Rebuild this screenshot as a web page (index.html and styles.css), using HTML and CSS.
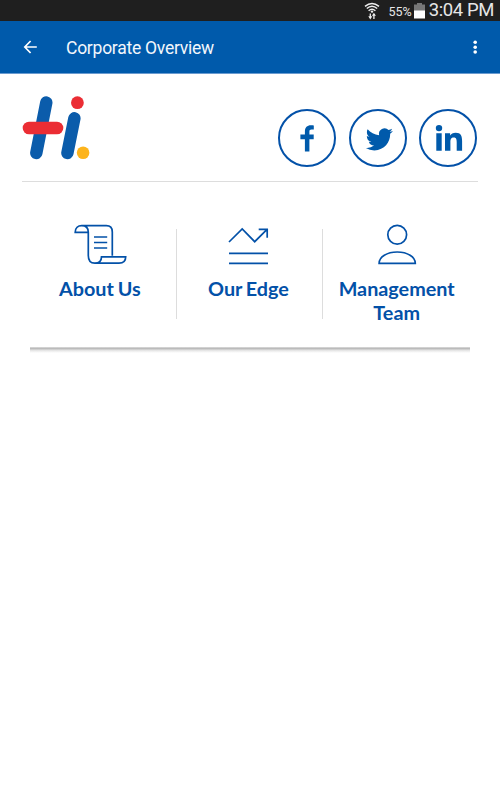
FILE: index.html
```
<!DOCTYPE html>
<html lang="en">
<head>
    <meta charset="UTF-8">
    <title>Corporate Overview</title>
    <link rel="stylesheet" href="styles.css">
</head>
<body>
    <div class="status-bar">
        <svg class="wifi" width="16" height="18" viewBox="0 0 16 18" fill="none" stroke="#eee" stroke-width="1.4">
            <path d="M1 4.4Q8 -1.6 15 4.4M2.8 6.6Q8 2 13.2 6.6M4.6 8.7Q8 5.6 11.4 8.7"/>
            <circle cx="8" cy="9.6" r="1.2" fill="#eee" stroke="none"/>
            <path d="M6.3 11.5V16M9.9 12V17" stroke-width="1.3"/>
            <path d="M4.3 14.2H8.3L6.3 17.4ZM7.9 13.8H11.9L9.9 10.8Z" fill="#eee" stroke="none"/>
        </svg>
        <span class="battery-level">55%</span>
        <svg class="battery" width="11" height="16" viewBox="0 0 11 16">
            <path d="M3 0H8V1.5H11V8H0V1.5H3Z" fill="#777"/>
            <path d="M0 7.5H11V15.5H0Z" fill="#fff"/>
        </svg>
        <span class="clock">3:04 PM</span>
    </div>

    <header class="app-bar">
        <svg width="14" height="14" viewBox="0 0 14 14" fill="none" stroke="#fff" stroke-width="1.7">
            <path d="M7.6 1L1.8 7L7.6 13M1.8 7H13.8"/>
        </svg>
        <h1>Corporate Overview</h1>
        <svg width="4" height="14" viewBox="0 0 4 14" fill="#fff">
            <circle cx="2.2" cy="2.2" r="1.8"/>
            <circle cx="2.2" cy="7.2" r="1.8"/>
            <circle cx="2.2" cy="12" r="1.8"/>
        </svg>
    </header>

    <main>
        <div class="brand-row">
            <svg class="logo" width="68" height="64" viewBox="22 96 68 64" fill="none" stroke-linecap="round">
                <path d="M46.3 102.5L36.3 153M74.4 118.3L67.4 153" stroke="#0b5cab" stroke-width="12.4"/>
                <path d="M29 128H57" stroke="#eb2d34" stroke-width="12.6"/>
                <circle cx="77.4" cy="102.7" r="6.4" fill="#eb2d34"/>
                <circle cx="83.1" cy="152.8" r="6.3" fill="#fdb41c"/>
            </svg>
            <div class="social">
                <a class="social-link" aria-label="Facebook">
                    <svg width="58" height="58" viewBox="0 0 58 58">
                        <path d="M26.9 42.5V30.2H22.4V25.6H26.9V22.4C26.9 18.3 29.2 16.2 32.8 16.2C34.2 16.2 35.2 16.3 35.8 16.4V20.6H33.5C31.8 20.6 31.4 21.4 31.4 22.8V25.6H35.7V30.2H31.4V42.5Z"/>
                    </svg>
                </a>
                <a class="social-link" aria-label="Twitter">
                    <svg width="58" height="58" viewBox="0 0 58 58">
                        <path transform="translate(16.8 16.8) scale(1.13)" d="M23.954 4.569a10 10 0 0 1-2.825.775 4.958 4.958 0 0 0 2.163-2.723c-.951.555-2.005.959-3.127 1.184a4.92 4.92 0 0 0-8.384 4.482C7.691 8.094 4.066 6.13 1.64 3.161a4.822 4.822 0 0 0-.666 2.475c0 1.71.87 3.213 2.188 4.096a4.904 4.904 0 0 1-2.228-.616v.061a4.923 4.923 0 0 0 3.946 4.827 4.996 4.996 0 0 1-2.212.085 4.937 4.937 0 0 0 4.604 3.417 9.868 9.868 0 0 1-6.102 2.105c-.39 0-.779-.023-1.17-.067a13.995 13.995 0 0 0 7.557 2.209c9.054 0 13.999-7.496 13.999-13.986 0-.209 0-.42-.015-.63a9.936 9.936 0 0 0 2.46-2.548z"/>
                    </svg>
                </a>
                <a class="social-link" aria-label="LinkedIn">
                    <svg width="58" height="58" viewBox="0 0 58 58">
                        <circle cx="20" cy="19.1" r="3.2"/>
                        <path d="M17.3 24.2H22.7V41.8H17.3ZM26 24.2H31.1V26.6C32 25 34 23.7 36.7 23.7C42 23.7 43.1 27.2 43.1 31.9V41.8H37.7V33C37.7 30.7 37.5 28.4 34.8 28.4C32 28.4 31.4 30.5 31.4 32.8V41.8H26Z"/>
                    </svg>
                </a>
            </div>
        </div>

        <nav class="menu">
            <a class="menu-item about">
                <svg width="54" height="42" viewBox="73 223 54 42">
                    <path d="M88.3 232.3H75.2C75.2 228 78 225.7 81.7 225.7H106.3C110.5 225.7 112.3 228.2 112.3 232V255.8M81.7 225.7C86 225.7 88.3 228 88.3 232.3V255.5C88.3 260.5 90.5 263.2 94.8 263.2H119C123 263.2 125.7 260.8 125.7 256.8H101.5C101.5 260.8 98.8 263.2 94.8 263.2"/>
                    <path d="M94 237H107.2M94 242.5H107.2M94 248H107.2"/>
                </svg>
                <span>About Us</span>
            </a>
            <a class="menu-item edge">
                <svg width="42" height="42" viewBox="227 223 42 42">
                    <path d="M229 242L242.2 229L254.7 241.7L266.8 229.7M258.7 229.3H267.2V237.8M229 253.3H268M229 263.3H268"/>
                </svg>
                <span>Our Edge</span>
            </a>
            <a class="menu-item">
                <svg width="40" height="42" viewBox="377 223 40 42">
                    <circle cx="397.2" cy="234.8" r="9.4"/>
                    <path d="M379.1 263.4C379.1 256.8 387 252 397.2 252C407.4 252 415.3 256.8 415.3 263.4Z"/>
                </svg>
                <span>Management Team</span>
            </a>
        </nav>
    </main>
</body>
</html>
```

FILE: styles.css
```
:root {
    --bar-color: #005aab;
    --icon-color: #0351a8;
}

* {
    box-sizing: border-box;
    margin: 0;
    padding: 0;
}

body {
    font-family: Roboto, sans-serif;
    background-color: #fff;
}

.status-bar {
    display: flex;
    align-items: center;
    justify-content: flex-end;
    height: 21px;
    padding-right: 6px;
    background-color: #1f1f1f;
    color: #e6e6e6;
    line-height: 21px;
}

.wifi {
    margin-right: 8px;
}

.battery-level {
    margin-right: 2px;
    padding-top: 1px;
    font-size: 12.5px;
}

.battery {
    margin-right: 4px;
}

.clock {
    font-size: 18.5px;
    letter-spacing: -0.4px;
}

.app-bar {
    display: flex;
    align-items: center;
    height: 53px;
    padding: 0 23px;
    background-color: var(--bar-color);
    border-bottom: 1px solid #6a9bd0;
    color: #f2f6fb;
}

.app-bar h1 {
    flex: 1;
    margin-left: 29px;
    padding-top: 1px;
    font-size: 17.5px;
    font-weight: 400;
    letter-spacing: -0.25px;
}

.brand-row {
    display: flex;
    justify-content: space-between;
    align-items: flex-start;
    height: 108px;
    margin: 0 22px;
    padding-top: 22px;
    border-bottom: 1px solid #ddd;
}

.social {
    display: flex;
    gap: 12.5px;
    margin: 13.4px 1px 0 0;
}

.social-link {
    width: 58px;
    height: 58px;
    border: 2px solid var(--icon-color);
    border-radius: 50%;
    fill: var(--bar-color);
}

.social-link svg {
    display: block;
    margin: -2px;
}

.menu {
    display: grid;
    grid-template-columns: repeat(3, 1fr);
    height: 171px;
    margin: 0 30px;
    padding: 41px 0 0;
    /* soft shadow under the tiles only */
    background: linear-gradient(#ddd, #bbb 25%, #e8e8e8 60%, #fff) bottom / 100% 6px no-repeat;
}

.menu-item {
    display: flex;
    flex-direction: column;
    align-items: center;
    gap: 11px;
    color: var(--icon-color);
    font-family: Lato, sans-serif;
    font-size: 19.8px;
    font-weight: 700;
    line-height: 24px;
    text-align: center;
    word-spacing: -1px;
}

.menu-item svg {
    fill: none;
    stroke: var(--icon-color);
    stroke-width: 1.7;
}

/* thin separators between the tiles */
.about,
.edge {
    background: linear-gradient(#ddd, #ddd) right 6px / 1px 90px no-repeat;
}

.about {
    padding-right: 7px;
}

.edge {
    padding-right: 3px;
}
```
